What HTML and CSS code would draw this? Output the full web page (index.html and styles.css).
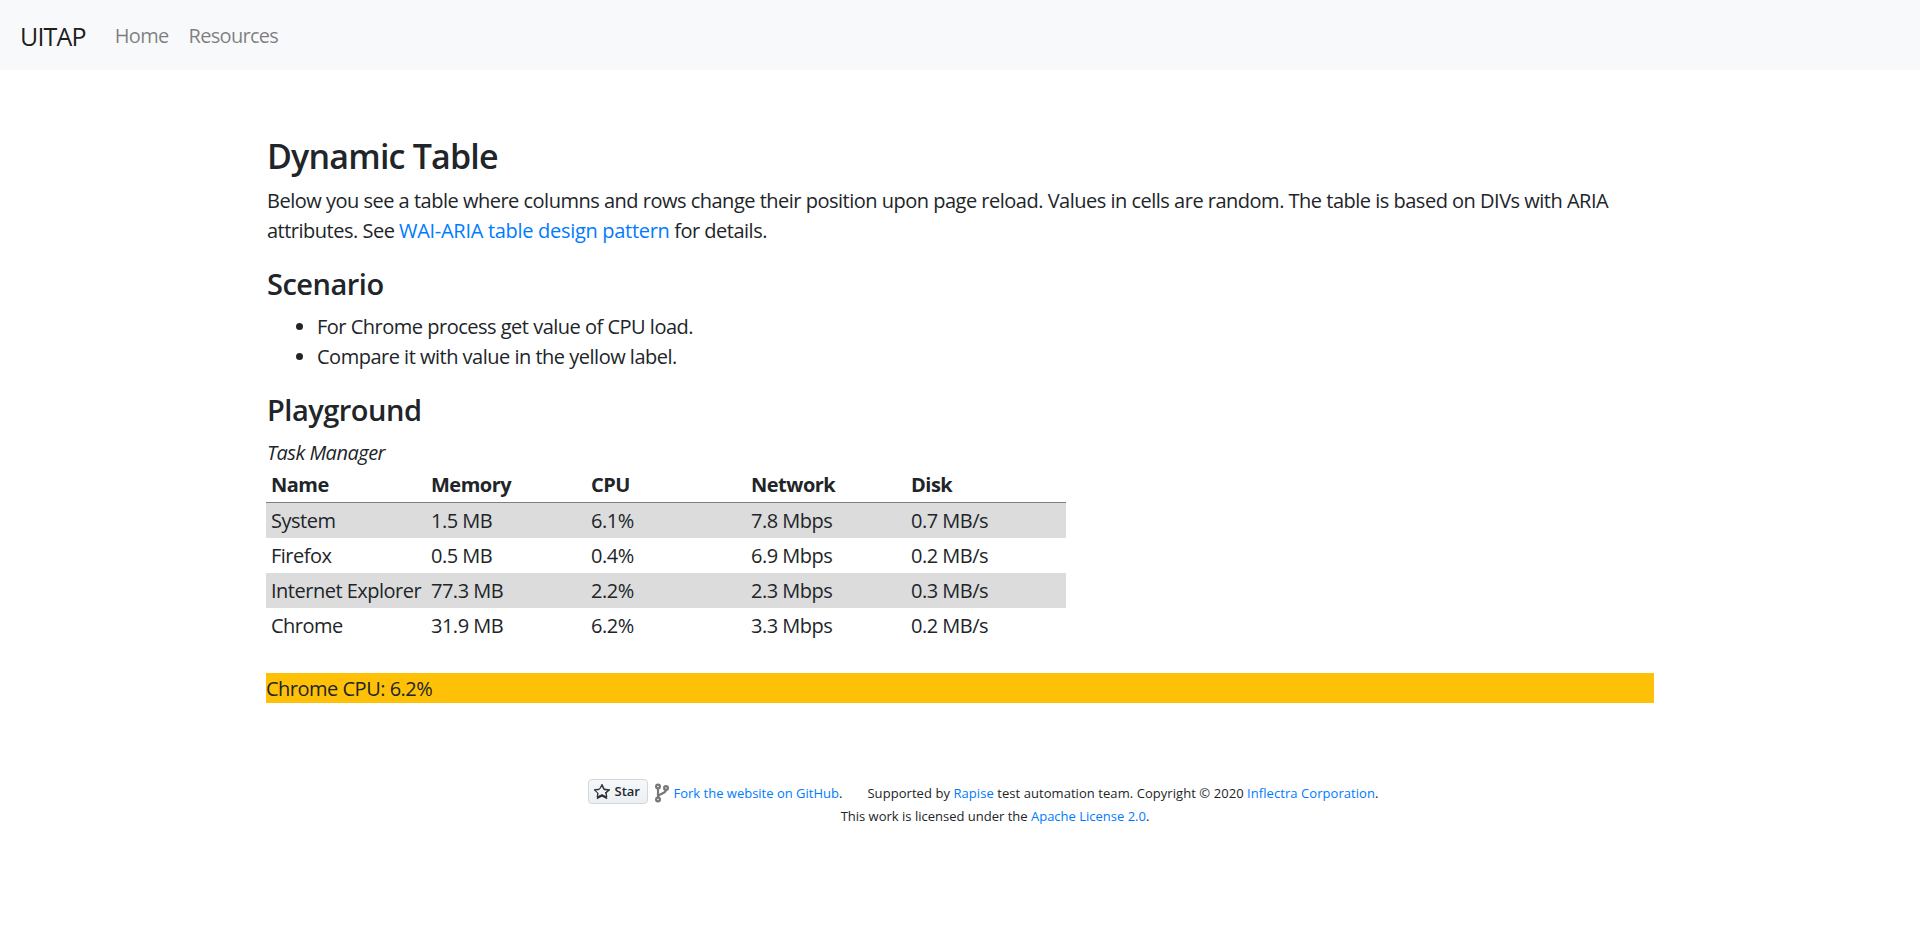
FILE: index.html
```html
<!DOCTYPE html>
<html lang="en">
<head>
<meta charset="UTF-8" />
<title>Dynamic Table</title>
<link rel="stylesheet" href="styles.css">
</head>
<body>

<nav class="navbar">
  <a class="brand" href="#">UITAP</a>
  <a class="nav-link" href="#">Home</a>
  <a class="nav-link" href="#">Resources</a>
</nav>

<main class="container">
  <h1>Dynamic Table</h1>
  <p>Below you see a table where columns and rows change their position upon page reload. Values in cells are random. The table is based on DIVs with ARIA attributes. See <a class="spec-link" href="#">WAI-ARIA table design pattern</a> for details.</p>

  <h2>Scenario</h2>
  <ul>
    <li>For Chrome process get value of CPU load.</li>
    <li>Compare it with value in the yellow label.</li>
  </ul>

  <h2>Playground</h2>
  <div class="caption">Task Manager</div>
  <div class="table" role="table">
    <div class="row head" role="row">
      <span role="columnheader">Name</span>
      <span role="columnheader">Memory</span>
      <span role="columnheader">CPU</span>
      <span role="columnheader">Network</span>
      <span role="columnheader">Disk</span>
    </div>
    <div class="row" role="row">
      <span role="cell">System</span><span role="cell">1.5 MB</span><span role="cell">6.1%</span><span role="cell">7.8 Mbps</span><span role="cell">0.7 MB/s</span>
    </div>
    <div class="row" role="row">
      <span role="cell">Firefox</span><span role="cell">0.5 MB</span><span role="cell">0.4%</span><span role="cell">6.9 Mbps</span><span role="cell">0.2 MB/s</span>
    </div>
    <div class="row" role="row">
      <span role="cell">Internet Explorer</span><span role="cell">77.3 MB</span><span role="cell">2.2%</span><span role="cell">2.3 Mbps</span><span role="cell">0.3 MB/s</span>
    </div>
    <div class="row" role="row">
      <span role="cell">Chrome</span><span role="cell">31.9 MB</span><span role="cell">6.2%</span><span role="cell">3.3 Mbps</span><span role="cell">0.2 MB/s</span>
    </div>
  </div>
  <p class="label-warning">Chrome CPU: 6.2%</p>
</main>

<footer class="footer">
  <div class="footer-line">
    <a class="star-btn" href="#">
      <svg viewBox="0 0 14 16" width="16" height="18"><path d="M14 6l-4.9-.64L7 1 4.9 5.36 0 6l3.6 3.26L2.67 14 7 11.67 11.33 14l-.93-4.74L14 6zm-3.28 2.84l.7 3.57L7 10.3l-4.42 2.11.7-3.57L.6 6.46l3.72-.49L7 2.6l1.68 3.37 3.72.49-2.68 2.38z" fill="#24292e" stroke="#24292e" stroke-width=".7" fill-rule="evenodd"/></svg>
      Star
    </a>
    <svg class="fork" viewBox="0 0 14 20" width="14" height="20"><g fill="none" stroke="#777" stroke-width="2.2"><circle cx="3" cy="3.5" r="1.9"/><circle cx="3" cy="16.5" r="1.9"/><circle cx="11" cy="5" r="1.9"/><path d="M3 5.4v9.2M11 7c0 4-8 3.500-8 7"/></g></svg>
    <span><a href="#">Fork the website on GitHub</a>.</span>
    <span class="supported">Supported by <a href="#">Rapise</a> test automation team. Copyright © 2020 <a href="#">Inflectra Corporation</a>.</span>
  </div>
  <div>This work is licensed under the <a href="#">Apache License 2.0</a>.</div>
</footer>

</body>
</html>
```

FILE: styles.css
```css
body {
  font-family: "Open Sans", "Noto Sans", sans-serif;
  font-size: 20px;
  line-height: 30px;
  margin: 0;
  color: #212529;
  background: white;
}
a {
  color: #007bff;
  text-decoration: none;
}
.navbar {
  display: flex;
  align-items: center;
  height: 70px;
  padding: 2px 20px 0;
  box-sizing: border-box;
  background: #f8f9fa;
}
.brand {
  font-size: 25px;
  letter-spacing: -0.8px;
  color: rgba(0,0,0,.9);
  margin-right: 19px;
}
.nav-link {
  color: rgba(0,0,0,.5);
  letter-spacing: -0.7px;
  padding: 0 10px;
}
.container {
  width: 1388px;
  margin: 0 auto;
  padding-top: 60px;
  letter-spacing: -0.5px;
}
h1 {
  font-size: 34px;
  letter-spacing: -0.8px;
  line-height: 44px;
  font-weight: 600;
  margin: 4px 0 8px 1px;
}
h2 {
  font-size: 29px;
  line-height: 35px;
  font-weight: 600;
  margin: 0 0 11px 1px;
}
p {
  margin: 0 0 20px 1px;
}
.spec-link {
  letter-spacing: -0.3px;
}
ul {
  margin: 0 0 20px 1px;
  padding-left: 50px;
}
.caption {
  font-style: italic;
  margin-left: 1px;
  height: 30px;
}
.table {
  width: 800px;
}
.row {
  display: grid;
  grid-template-columns: repeat(5, 160px);
  height: 35px;
  line-height: 35px;
}
.row span {
  padding-left: 5px;
  white-space: nowrap;
}
.row:nth-child(even) {
  background: #dcdcdc;
}
.row.head {
  font-weight: 700;
  height: 34px;
  line-height: 33px;
  border-bottom: 1px solid #808080;
}
.label-warning {
  background: #ffc107;
  margin: 30px 0 0;
  padding-top: 1px;
  line-height: 29px;
}
.footer {
  margin-top: 79px;
  padding-left: 70px;
  text-align: center;
  font-size: 13px;
  line-height: 25px;
}
.footer-line {
  display: flex;
  justify-content: center;
  align-items: center;
  gap: 4px;
  height: 22px;
  padding-right: 23px;
}
.star-btn {
  display: inline-flex;
  align-items: center;
  gap: 4px;
  box-sizing: border-box;
  width: 60px;
  height: 25px;
  padding: 0 5px;
  margin: 0 3px 3px 0;
  color: #24292e;
  font-weight: 600;
  background: linear-gradient(#f6f8fa, #ebf0f4);
  border: 1px solid #d5d6d8;
  border-radius: 4px;
}
.supported {
  margin-left: 21px;
  letter-spacing: 0.06px;
}
```
